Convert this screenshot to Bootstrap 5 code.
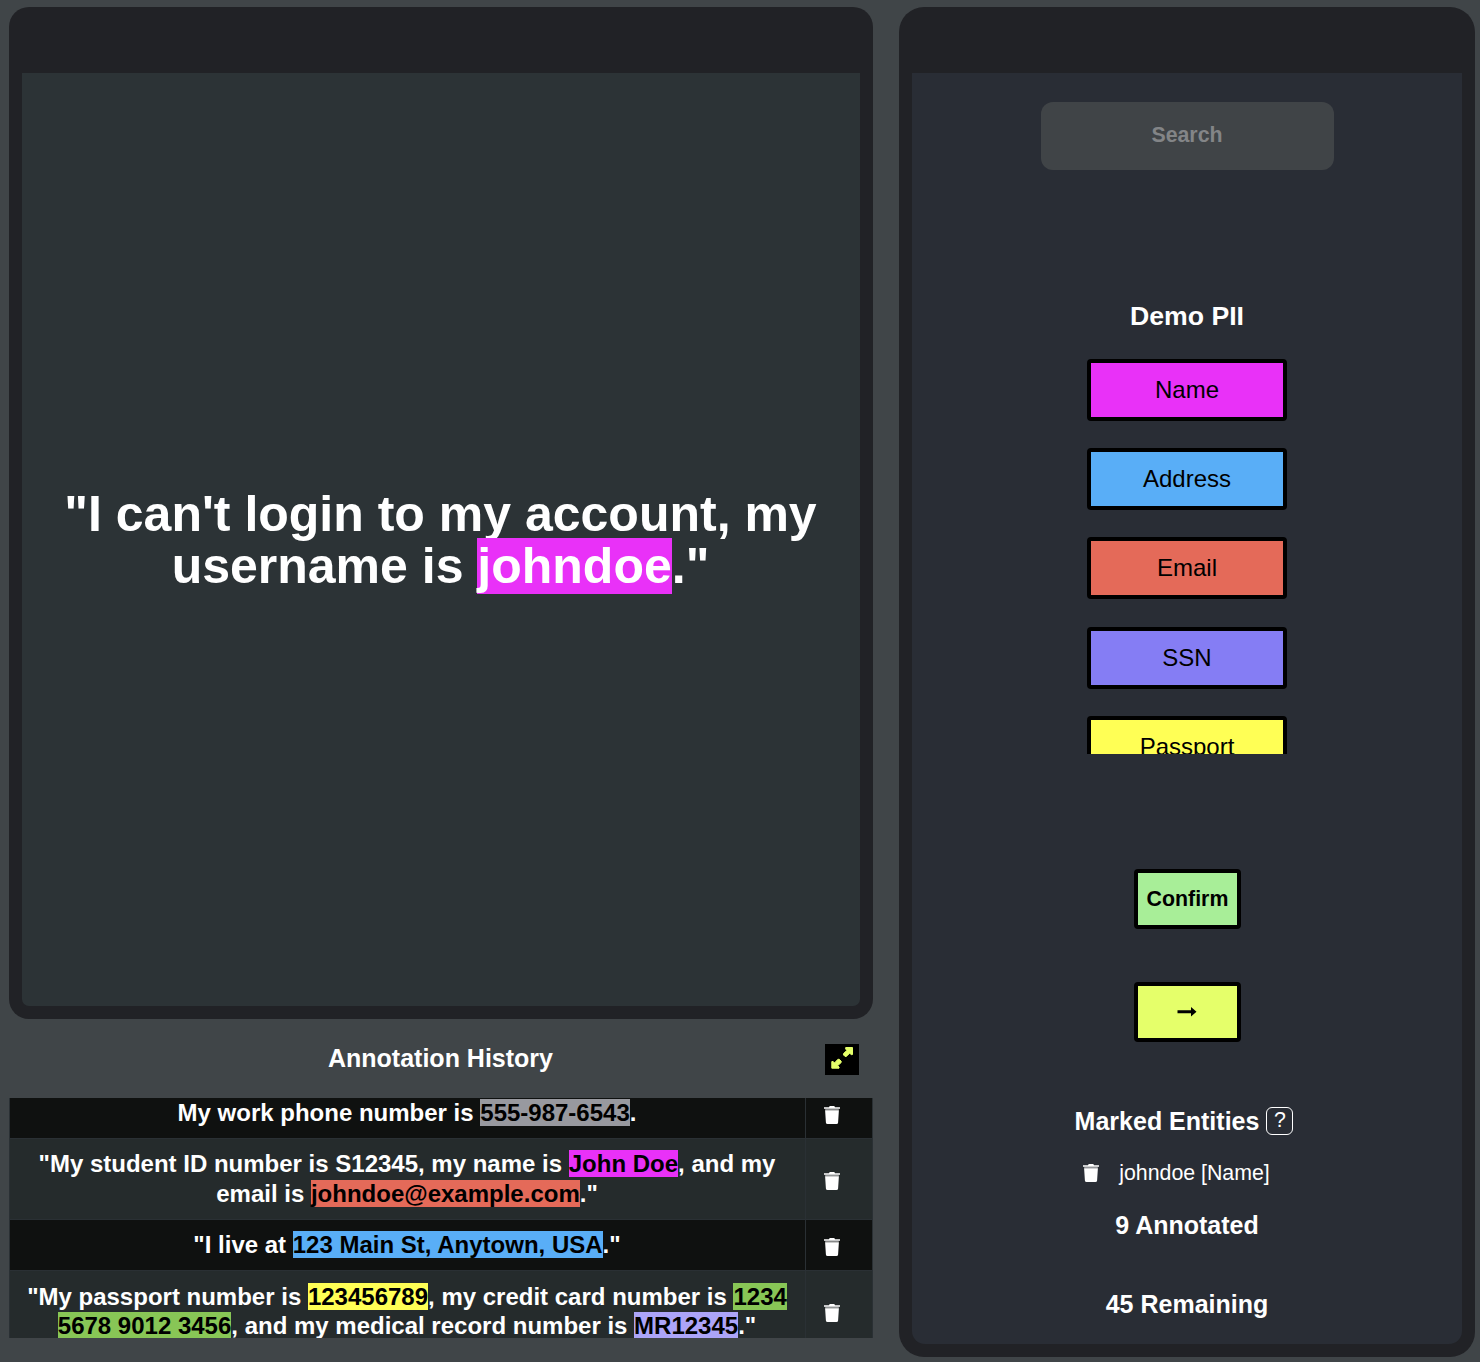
<!DOCTYPE html>
<html lang="en" data-bs-theme="dark">
<head>
<meta charset="utf-8">
<meta name="viewport" content="width=device-width, initial-scale=1">
<title>PII Annotation</title>
<link href="https://cdn.jsdelivr.net/npm/bootstrap@5.3.0/dist/css/bootstrap.min.css" rel="stylesheet">
<style>
  body { background: #404548; color: #fff; font-family: "Liberation Sans", Arial, sans-serif; height: 1362px; overflow: hidden; }
  .workspace { padding: 7px 5px 5px 9px; gap: 26px; height: 1362px; }
  .left-pane { width: 864px; }
  .frame { background: #212226; border-radius: 20px; padding: 66px 13px 13px; }
  .text-frame { height: 1012px; }
  .text-area { background: #2c3336; border-radius: 0 0 7px 7px; padding-right: 1px; }
  .sentence { font-size: 50px; line-height: 52px; font-weight: 700; margin: 0; }
  .ent { color: #000; }
  .ent-name { background: #e931f8; }
  .ent-address { background: #59aef7; }
  .ent-email { background: #e46a59; }
  .ent-ssn { background: #857df4; }
  .ent-passport { background: #ffff55; }
  .ent-card { background: #88c656; }
  .ent-phone { background: #98999f; }
  .ent-record { background: #aca4f8; }
  .history-head { height: 79px; }
  .history-head h2, .side-title { font-size: 25px; line-height: 30px; font-weight: 700; margin: 0; }
  .history-head h2 { padding: 0 1px 2px 0; }
  .expand-btn { width: 34px; height: 31px; background: #000; border: 0; border-radius: 0; padding: 0; right: 14px; top: 25px; }
  .history-scroll { height: 240px; }
  .history { margin: -11px 0 0; font-size: 24px; line-height: 30px; font-weight: 700; table-layout: fixed; border-collapse: collapse; --bs-table-color: #fff; }
  .history td { background: #252b2c; border: 1px solid #2a3034; padding: 10px 11px 10px 10px; vertical-align: middle; color: #fff; box-shadow: none; }
  .history tr:nth-child(odd) td { background: #0f1110; }
  .history tr:last-child td { line-height: 29px; padding-top: 11px; }
  .history tr td.act-cell { padding: 12px 14px 8px 0; }
  .history tr:last-child td.act-cell { padding: 13px 14px 9px 0; }
  .trash { width: 16px; height: 18px; display: block; }
  .side { width: 576px; border-radius: 25px; }
  .side-body { background: #292d35; border-radius: 0 0 13px 13px; padding-top: 29px; }
  .search { width: 293px; height: 68px; background: #404447; border: 0; border-radius: 12px; font-size: 21.33px; font-weight: 700; color: #fff; padding: 0 0 2px; }
  .search::placeholder { color: #838587; opacity: 1; }
  .group-title { font-size: 26.67px; line-height: 32px; font-weight: 700; margin: 130px 0 0; }
  .labels { height: 395px; margin-top: 27px; gap: 27.2px; }
  .label-btn { flex: none; width: 200px; height: 62px; border: 4px solid #000; border-radius: 4px; font-size: 24px; line-height: 30px; padding: 0; color: #000; }
  .act-btn { width: 107px; height: 60px; border: 4px solid #000; border-radius: 4px; font-size: 21.33px; line-height: 28px; font-weight: 700; padding: 0; color: #000; }
  .confirm { background: #a8ee98; margin-top: 115px; padding-left: 1px; }
  .next { background: #e5ff6a; margin-top: 53px; }
  .marked { margin-top: 64px; gap: 7px; margin-right: 6px; }
  .help { width: 27px; height: 28px; border: 1px solid #fff; border-radius: 6px; font-size: 21.33px; line-height: 25px; }
  .marked-item { font-size: 21.33px; line-height: 26px; gap: 20px; margin-top: 24px; margin-right: 21px; }
  .done-count { margin-top: 24px; }
  .left-count { margin-top: 49px; }
</style>
<script src="https://cdn.jsdelivr.net/npm/bootstrap@5.3.0/dist/js/bootstrap.bundle.min.js"></script>
</head>
<body>
<svg class="d-none">
  <symbol id="trash" viewBox="0 0 16 18">
    <path fill="#fff" d="M0 1.200h5L5.700 0h4.600L11 1.200h5v1.600H0z"/>
    <path fill="#fff" opacity=".5" d="M1.200 2.800h13.600v1.400H1.200z"/>
    <path fill="#fff" d="M1.100 4.200h13.800l-.8 12.200a1.700 1.700 0 0 1-1.700 1.600H3.600a1.700 1.700 0 0 1-1.700-1.600z"/>
  </symbol>
</svg>
<div class="workspace d-flex">
  <main class="left-pane d-flex flex-column">
    <section class="frame text-frame d-flex">
      <div class="text-area flex-grow-1 d-flex align-items-center justify-content-center text-center">
        <p class="sentence">"I can't login to my account, my<br>username is <span class="ent-name">johndoe</span>."</p>
      </div>
    </section>
    <header class="history-head position-relative d-flex align-items-center justify-content-center">
      <h2>Annotation History</h2>
      <button class="expand-btn btn position-absolute d-flex" type="button" aria-label="Expand">
        <svg width="34" height="31" viewBox="0 0 34 31" fill="#e5ff6a" stroke="#e5ff6a" stroke-linejoin="round">
          <path stroke-width="1" d="M20.700 3.500h6.800v7l-1.300.2-1.500-1.500-3.400 3.200h-1.300l-1.500-1.500v-1.300l3.400-3.200-1.300-1.500z"/>
          <path stroke-width="1" d="M14 24.200H6.800v-6.600l1.300-.2 1.500 1.500 3.300-3.600h1.300l2 1.900v1.300l-3.600 3.200 1.500 1.300z"/>
        </svg>
      </button>
    </header>
    <section class="history-scroll overflow-hidden">
      <table class="history table text-center">
        <colgroup><col><col style="width:67px"></colgroup>
        <tbody>
          <tr><td>My work phone number is <span class="ent ent-phone">555-987-6543</span>.</td>
            <td class="act-cell"><svg class="trash mx-auto"><use href="#trash"/></svg></td></tr>
          <tr><td>"My student ID number is S12345, my name is <span class="ent ent-name">John Doe</span>, and my email is <span class="ent ent-email">johndoe@example.com</span>."</td>
            <td class="act-cell"><svg class="trash mx-auto"><use href="#trash"/></svg></td></tr>
          <tr><td>"I live at <span class="ent ent-address">123 Main St, Anytown, USA</span>."</td>
            <td class="act-cell"><svg class="trash mx-auto"><use href="#trash"/></svg></td></tr>
          <tr><td>"My passport number is <span class="ent ent-passport">123456789</span>, my credit card number is <span class="ent ent-card">1234 5678 9012 3456</span>, and my medical record number is <span class="ent ent-record">MR12345</span>."</td>
            <td class="act-cell"><svg class="trash mx-auto"><use href="#trash"/></svg></td></tr>
        </tbody>
      </table>
    </section>
  </main>
  <aside class="frame side d-flex">
    <div class="side-body flex-grow-1 d-flex flex-column align-items-center">
      <input class="search form-control text-center" type="text" placeholder="Search">
      <h1 class="group-title">Demo PII</h1>
      <div class="labels d-flex flex-column overflow-hidden">
        <button class="label-btn btn ent-name" type="button">Name</button>
        <button class="label-btn btn ent-address" type="button">Address</button>
        <button class="label-btn btn ent-email" type="button">Email</button>
        <button class="label-btn btn ent-ssn" type="button">SSN</button>
        <button class="label-btn btn ent-passport" type="button">Passport</button>
      </div>
      <button class="act-btn confirm btn" type="button">Confirm</button>
      <button class="act-btn next btn d-flex align-items-center justify-content-center" type="button" aria-label="Next">
        <svg width="20" height="12" viewBox="0 0 20 12"><path d="M.5 4.300H14V1l5.500 4.700L14 10.500V7.200H.5z"/></svg>
      </button>
      <div class="marked d-flex align-items-center">
        <h2 class="side-title">Marked Entities</h2><span class="help text-center">?</span>
      </div>
      <div class="marked-item d-flex align-items-center"><svg class="trash"><use href="#trash"/></svg><span>johndoe [Name]</span></div>
      <h2 class="side-title done-count">9 Annotated</h2>
      <h2 class="side-title left-count">45 Remaining</h2>
    </div>
  </aside>
</div>
</body>
</html>
